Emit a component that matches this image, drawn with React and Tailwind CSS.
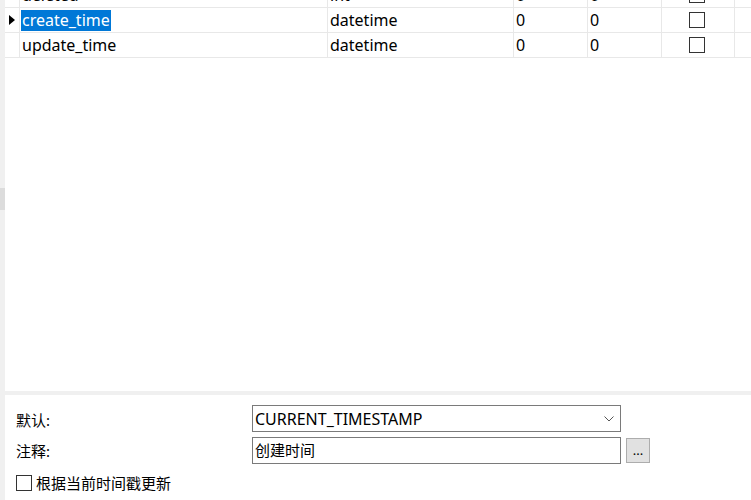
import React from 'react';

const font = { fontFamily: '"Noto Sans", "Noto Sans CJK SC", sans-serif' };

const rows = [
  { name: 'deleted', type: 'int', len: '0', dec: '0' },
  { name: 'create_time', type: 'datetime', len: '0', dec: '0', selected: true },
  { name: 'update_time', type: 'datetime', len: '0', dec: '0' },
];

function Box() {
  return <div className="w-[16px] h-[16px] border border-[#333] bg-white" />;
}

function Row({ row, first }) {
  return (
    <div className={`flex border-b border-[#e8e8e8] h-[25px] ${first ? '-mt-[17px]' : ''}`}>
      <div className="w-[15px] shrink-0 border-r border-[#e8e8e8] flex items-center justify-center">
        {row.selected && (
          <svg width="6" height="10" viewBox="0 0 6 10">
            <path d="M0 0 L6 5 L0 10 Z" fill="#000" />
          </svg>
        )}
      </div>
      <div className="w-[308px] shrink-0 border-r border-[#e8e8e8] flex items-center pl-[1px]">
        <span className={row.selected ? 'bg-[#0078d7] text-white px-[1px] leading-[21px]' : 'px-[1px]'}>
          {row.name}
        </span>
      </div>
      <div className="w-[186px] shrink-0 border-r border-[#e8e8e8] flex items-center pl-[2px]">{row.type}</div>
      <div className="w-[74px] shrink-0 border-r border-[#e8e8e8] flex items-center pl-[2px]">{row.len}</div>
      <div className="w-[74px] shrink-0 border-r border-[#e8e8e8] flex items-center pl-[2px]">{row.dec}</div>
      <div className="w-[73px] shrink-0 border-r border-[#e8e8e8] flex items-center pl-[27px]">
        <Box />
      </div>
      <div className="flex-1" />
    </div>
  );
}

export default function App() {
  return (
    <div className="w-[751px] h-[500px] overflow-hidden flex bg-white text-[16px] text-black" style={font}>
      {/* left splitter strip */}
      <div className="w-[5px] shrink-0 bg-[#f0f0f0] flex flex-col">
        <div className="h-[188px]" />
        <div className="h-[22px] bg-[#dcdcdc]" />
      </div>

      <div className="flex-1 flex flex-col">
        {/* grid */}
        <div className="h-[391px] overflow-hidden">
          {rows.map((r, i) => (
            <Row key={r.name} row={r} first={i === 0} />
          ))}
        </div>

        <div className="h-[4px] bg-[#f0f0f0]" />

        {/* bottom properties panel */}
        <div className="flex-1 pl-[11px] pt-[10px]">
          <div className="flex items-center h-[27px]">
            <div className="w-[236px] text-[15px] pt-[3px]">默认:</div>
            <div className="w-[369px] h-[27px] border border-[#7a7a7a] flex items-center justify-between pl-[2px] pr-[6px]">
              <span>CURRENT_TIMESTAMP</span>
              <svg width="10" height="6" viewBox="0 0 10 6">
                <path d="M0.5 0.5 L5 5 L9.5 0.5" stroke="#555" strokeWidth="1" fill="none" />
              </svg>
            </div>
          </div>
          <div className="flex items-center h-[27px] mt-[5px]">
            <div className="w-[236px] text-[15px] pt-[1px]">注释:</div>
            <div className="w-[369px] h-[27px] border border-[#7a7a7a] flex items-center pl-[2px] text-[15px]">创建时间</div>
            <div className="ml-[5px] w-[24px] h-[25px] bg-[#e1e1e1] border border-[#adadad] flex items-center justify-center text-[13px] leading-none">
              ...
            </div>
          </div>
          <div className="flex items-center mt-[8px] gap-[4px] text-[15px]">
            <div className="w-[16px] h-[16px] border border-[#333] bg-white" />
            <span>根据当前时间戳更新</span>
          </div>
        </div>
      </div>
    </div>
  );
}
